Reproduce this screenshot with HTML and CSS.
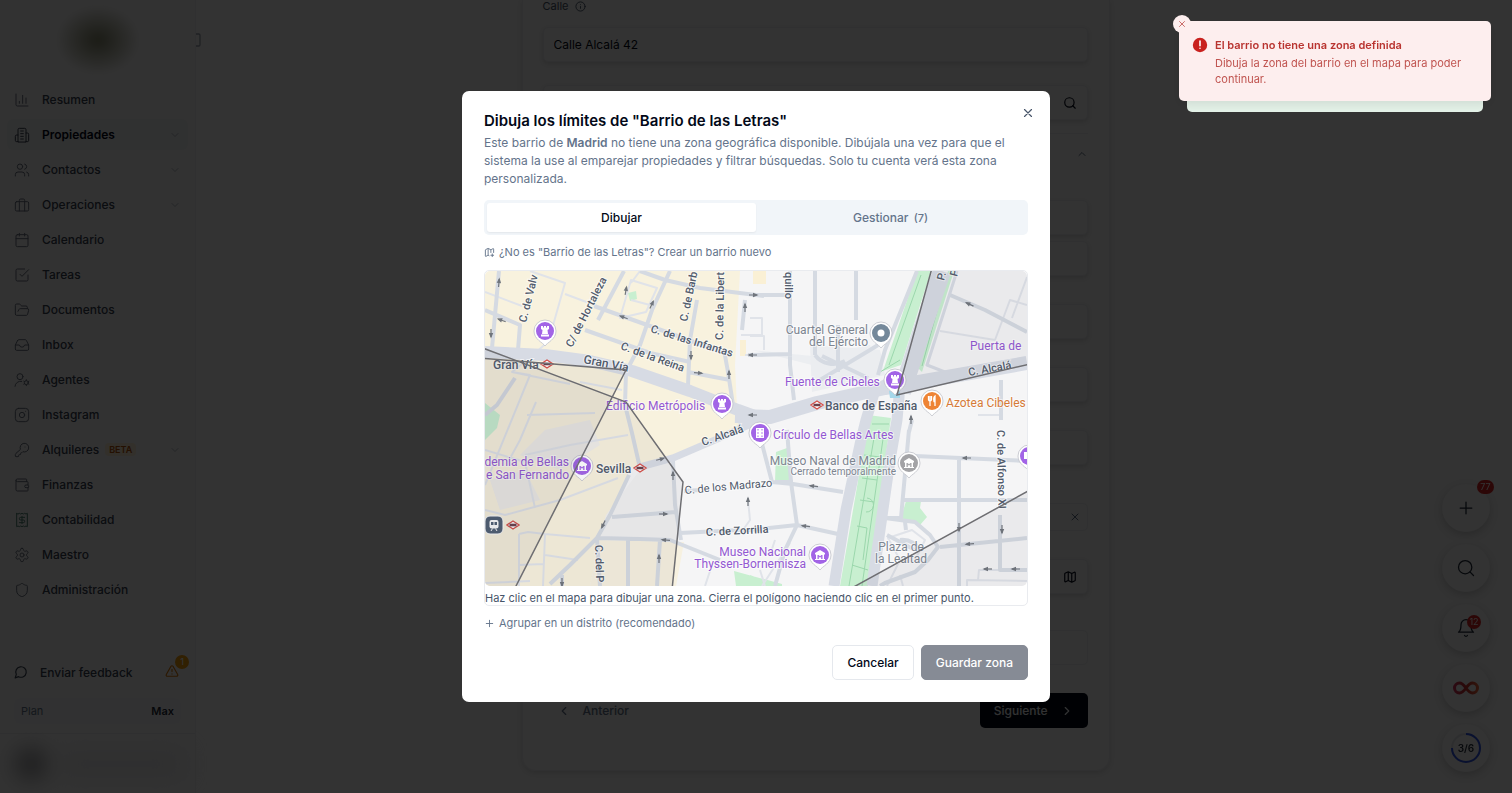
FILE: index.html
```html
<!DOCTYPE html>
<html lang="es">
<head>
  <meta charset="UTF-8" />
  <meta name="viewport" content="width=device-width, initial-scale=1.0"/>
  <title>Propiedades</title>
  <link rel="stylesheet" href="styles.css">
</head>
<body>

  <!-- icon sprite -->
  <svg class="sprite" aria-hidden="true">
    <symbol id="i-chart" viewBox="0 0 24 24"><path d="M3 3v16a2 2 0 0 0 2 2h16M18 17V9M13 17V5M8 17v-3"/></symbol>
    <symbol id="i-building" viewBox="0 0 24 24"><path d="M6 22V4a2 2 0 0 1 2-2h8a2 2 0 0 1 2 2v18ZM6 12H4a2 2 0 0 0-2 2v6a2 2 0 0 0 2 2h2M18 9h2a2 2 0 0 1 2 2v9a2 2 0 0 1-2 2h-2M10 6h4M10 10h4M10 14h4M10 18h4"/></symbol>
    <symbol id="i-users" viewBox="0 0 24 24"><path d="M16 21v-2a4 4 0 0 0-4-4H6a4 4 0 0 0-4 4v2M22 21v-2a4 4 0 0 0-3-3.87M16 3.13a4 4 0 0 1 0 7.75"/><circle cx="9" cy="7" r="4"/></symbol>
    <symbol id="i-briefcase" viewBox="0 0 24 24"><rect x="2" y="7" width="20" height="14" rx="2"/><path d="M16 21V5a2 2 0 0 0-2-2h-4a2 2 0 0 0-2 2v16"/></symbol>
    <symbol id="i-calendar" viewBox="0 0 24 24"><rect x="3" y="4" width="18" height="18" rx="2"/><path d="M16 2v4M8 2v4M3 10h18"/></symbol>
    <symbol id="i-check" viewBox="0 0 24 24"><path d="m9 11 3 3L22 4M21 12v7a2 2 0 0 1-2 2H5a2 2 0 0 1-2-2V5a2 2 0 0 1 2-2h11"/></symbol>
    <symbol id="i-folder" viewBox="0 0 24 24"><path d="m6 14 1.5-2.9A2 2 0 0 1 9.24 10H20a2 2 0 0 1 1.94 2.5l-1.54 6a2 2 0 0 1-1.95 1.5H4a2 2 0 0 1-2-2V5a2 2 0 0 1 2-2h3.9a2 2 0 0 1 1.69.9l.81 1.2a2 2 0 0 0 1.67.9H18a2 2 0 0 1 2 2v2"/></symbol>
    <symbol id="i-inbox" viewBox="0 0 24 24"><path d="M22 12h-6l-2 3h-4l-2-3H2M5.45 5.11 2 12v6a2 2 0 0 0 2 2h16a2 2 0 0 0 2-2v-6l-3.45-6.89A2 2 0 0 0 16.76 4H7.24a2 2 0 0 0-1.79 1.11z"/></symbol>
    <symbol id="i-agent" viewBox="0 0 24 24"><circle cx="9" cy="7" r="4.5"/><circle cx="18.5" cy="16" r="3"/><path d="M1.5 21.5a8 8 0 0 1 10-7.5M18.5 11.5V13M18.5 19v1.5M14.6 13.8l1.3.7M21.1 17.5l1.3.7M14.6 18.2l1.3-.7M21.1 14.5l1.3-.7"/></symbol>
    <symbol id="i-instagram" viewBox="0 0 24 24"><rect x="2" y="2" width="20" height="20" rx="5"/><circle cx="12" cy="12" r="4"/><path d="M17.5 6.5h.01"/></symbol>
    <symbol id="i-key" viewBox="0 0 24 24"><path d="M2.586 17.414A2 2 0 0 0 2 18.828V21a1 1 0 0 0 1 1h3a1 1 0 0 0 1-1v-1a1 1 0 0 1 1-1h1a1 1 0 0 0 1-1v-1a1 1 0 0 1 1-1h.172a2 2 0 0 0 1.414-.586l.814-.814a6.5 6.5 0 1 0-4-4z"/><path d="M16.5 7.5h.01"/></symbol>
    <symbol id="i-wallet" viewBox="0 0 24 24"><path d="M19 7V4a1 1 0 0 0-1-1H5a2 2 0 0 0 0 4h15a1 1 0 0 1 1 1v4h-3a2 2 0 0 0 0 4h3a1 1 0 0 0 1-1v-2a1 1 0 0 0-1-1M3 5v14a2 2 0 0 0 2 2h15a1 1 0 0 0 1-1v-4"/></symbol>
    <symbol id="i-receipt" viewBox="0 0 24 24"><path d="M4 2v20l2-1 2 1 2-1 2 1 2-1 2 1 2-1 2 1V2l-2 1-2-1-2 1-2-1-2 1-2-1-2 1ZM16 8h-6a2 2 0 1 0 0 4h4a2 2 0 1 1 0 4H8M12 17.5v-11"/></symbol>
    <symbol id="i-gear" viewBox="0 0 24 24"><path d="M12.22 2h-.44a2 2 0 0 0-2 2v.18a2 2 0 0 1-1 1.73l-.43.25a2 2 0 0 1-2 0l-.15-.08a2 2 0 0 0-2.73.73l-.22.38a2 2 0 0 0 .73 2.73l.15.1a2 2 0 0 1 1 1.72v.51a2 2 0 0 1-1 1.74l-.15.09a2 2 0 0 0-.73 2.73l.22.38a2 2 0 0 0 2.73.73l.15-.08a2 2 0 0 1 2 0l.43.25a2 2 0 0 1 1 1.73V20a2 2 0 0 0 2 2h.44a2 2 0 0 0 2-2v-.18a2 2 0 0 1 1-1.73l.43-.25a2 2 0 0 1 2 0l.15.08a2 2 0 0 0 2.73-.73l.22-.39a2 2 0 0 0-.73-2.73l-.15-.08a2 2 0 0 1-1-1.74v-.5a2 2 0 0 1 1-1.74l.15-.09a2 2 0 0 0 .73-2.73l-.22-.38a2 2 0 0 0-2.73-.73l-.15.08a2 2 0 0 1-2 0l-.43-.25a2 2 0 0 1-1-1.73V4a2 2 0 0 0-2-2z"/><circle cx="12" cy="12" r="3"/></symbol>
    <symbol id="i-shield" viewBox="0 0 24 24"><path d="M20 13c0 5-3.5 7.5-7.66 8.95a1 1 0 0 1-.67-.01C7.5 20.5 4 18 4 13V6a1 1 0 0 1 1-1c2 0 4.5-1.2 6.24-2.72a1.17 1.17 0 0 1 1.52 0C14.51 3.81 17 5 19 5a1 1 0 0 1 1 1z"/></symbol>
    <symbol id="i-message" viewBox="0 0 24 24"><path d="M7.9 20A9 9 0 1 0 4 16.1L2 22Z"/></symbol>
    <symbol id="i-alert" viewBox="0 0 24 24"><path d="m21.73 18-8-14a2 2 0 0 0-3.48 0l-8 14A2 2 0 0 0 4 21h16a2 2 0 0 0 1.73-3M12 9v4M12 17h.01"/></symbol>
    <symbol id="i-down" viewBox="0 0 24 24"><path d="m6 9 6 6 6-6"/></symbol>
    <symbol id="i-up" viewBox="0 0 24 24"><path d="m18 15-6-6-6 6"/></symbol>
    <symbol id="i-left" viewBox="0 0 24 24"><path d="m15 18-6-6 6-6"/></symbol>
    <symbol id="i-right" viewBox="0 0 24 24"><path d="m9 18 6-6-6-6"/></symbol>
    <symbol id="i-x" viewBox="0 0 24 24"><path d="M18 6 6 18M6 6l12 12"/></symbol>
    <symbol id="i-plus" viewBox="0 0 24 24"><path d="M5 12h14M12 5v14"/></symbol>
    <symbol id="i-search" viewBox="0 0 24 24"><circle cx="11" cy="11" r="8"/><path d="m21 21-4.3-4.3"/></symbol>
    <symbol id="i-info" viewBox="0 0 24 24"><circle cx="12" cy="12" r="10"/><path d="M12 16v-4M12 8h.01"/></symbol>
    <symbol id="i-panel" viewBox="0 0 24 24"><rect x="3" y="3" width="18" height="18" rx="2"/></symbol>
    <symbol id="i-map" viewBox="0 0 24 24"><path d="M14.106 5.553a2 2 0 0 0 1.788 0l3.659-1.83A1 1 0 0 1 21 4.619v12.764a1 1 0 0 1-.553.894l-4.553 2.277a2 2 0 0 1-1.788 0l-4.212-2.106a2 2 0 0 0-1.788 0l-3.659 1.83A1 1 0 0 1 3 19.381V6.618a1 1 0 0 1 .553-.894l4.553-2.277a2 2 0 0 1 1.788 0zM15 5.764v15M9 3.236v15"/></symbol>
    <symbol id="i-mapadd" viewBox="0 0 24 24"><path d="m11 19-1.106-.552a2 2 0 0 0-1.788 0l-3.659 1.83A1 1 0 0 1 3 19.381V6.618a1 1 0 0 1 .553-.894l4.553-2.277a2 2 0 0 1 1.788 0l4.212 2.106a2 2 0 0 0 1.788 0l3.659-1.83A1 1 0 0 1 21 4.619V12M15 5.764V12M18 15v6M21 18h-6M9 3.236v15"/></symbol>
    <symbol id="i-bell" viewBox="0 0 24 24"><path d="M6 8a6 6 0 0 1 12 0c0 7 3 9 3 9H3s3-2 3-9M10.3 21a1.94 1.94 0 0 0 3.4 0"/></symbol>

    <!-- map markers, origin at the centre of the disc -->
    <symbol id="pin" viewBox="-14 -14 28 32" overflow="visible"><path d="M0 15C-2 11.5-11 8.5-11 0a11 11 0 0 1 22 0C11 8.500 2 11.500 0 15z" fill="#fff" stroke="#bfc0c8" stroke-width=".8"/><circle r="9" fill="currentColor"/></symbol>
    <symbol id="g-tower" overflow="visible" viewBox="-8 -8 16 16"><path d="M-4-5h2v1.500h1V-5h2v1.500h1V-5h2v3l-1.500 1L3 3H-3l.5-4L-4-2zM-4 3.500h8V5.500h-8z" fill="#fff"/></symbol>
    <symbol id="g-museum" overflow="visible" viewBox="-8 -8 16 16"><path d="M-5-2 0-5l5 3v1.500H4V4h1v1h-10V4h1V-.5h-1zM-2.500 0v4h1.300V1.500L0 2.700l1.200-1.200V4h1.300V0H1.500L0 1.300-1.500 0z" fill="#fff" fill-rule="evenodd"/></symbol>
    <symbol id="g-metro" overflow="visible" viewBox="-8 -8 16 16"><path d="M-6.200 0 0-4 6.200 0 0 4z" fill="#fff" stroke="#d6504a" stroke-width="1.400" stroke-linejoin="round"/><path d="M-3.500-1.300h7v2.600h-7z" fill="#6b3f4a"/></symbol>
    <symbol id="arrow" overflow="visible" viewBox="-6 -6 12 12"><path d="M-5 0H3" stroke="#70757c" stroke-width="1.200"/><path d="M-1-2.200 4.500 0-1 2.200z" fill="#70757c"/></symbol>
  </svg>

  <div class="app">
    <aside class="sidebar">
      <div class="brand"><div class="brand-logo"></div></div>
      <nav class="menu">
        <a href="#"><svg class="icon"><use href="#i-chart"/></svg>Resumen</a>
        <a href="#" class="active"><svg class="icon"><use href="#i-building"/></svg>Propiedades<svg class="icon chevron"><use href="#i-down"/></svg></a>
        <a href="#"><svg class="icon"><use href="#i-users"/></svg>Contactos<svg class="icon chevron"><use href="#i-down"/></svg></a>
        <a href="#"><svg class="icon"><use href="#i-briefcase"/></svg>Operaciones<svg class="icon chevron"><use href="#i-down"/></svg></a>
        <a href="#"><svg class="icon"><use href="#i-calendar"/></svg>Calendario</a>
        <a href="#"><svg class="icon"><use href="#i-check"/></svg>Tareas</a>
        <a href="#"><svg class="icon"><use href="#i-folder"/></svg>Documentos</a>
        <a href="#"><svg class="icon"><use href="#i-inbox"/></svg>Inbox</a>
        <a href="#"><svg class="icon"><use href="#i-agent"/></svg>Agentes</a>
        <a href="#"><svg class="icon"><use href="#i-instagram"/></svg>Instagram</a>
        <a href="#"><svg class="icon"><use href="#i-key"/></svg>Alquileres<span class="beta">BETA</span><svg class="icon chevron"><use href="#i-down"/></svg></a>
        <a href="#"><svg class="icon"><use href="#i-wallet"/></svg>Finanzas</a>
        <a href="#"><svg class="icon green"><use href="#i-receipt"/></svg>Contabilidad</a>
        <a href="#"><svg class="icon"><use href="#i-gear"/></svg>Maestro</a>
        <a href="#"><svg class="icon"><use href="#i-shield"/></svg>Administración</a>
      </nav>
      <div class="sidebar-bottom">
        <div class="feedback">
          <a href="#"><svg class="icon"><use href="#i-message"/></svg>Enviar feedback</a>
          <button class="warn" aria-label="Avisos"><svg class="icon"><use href="#i-alert"/></svg><span class="warn-count">1</span></button>
        </div>
        <div class="plan"><span>Plan</span><strong>Max</strong></div>
      </div>
      <div class="user"><div class="user-avatar"></div><div class="user-name"></div></div>
    </aside>

    <button class="panel-toggle" aria-label="Contraer menú"><svg class="icon"><use href="#i-panel"/></svg></button>

    <main class="main">
      <form class="card">
        <label class="label" for="calle">Calle <svg class="icon"><use href="#i-info"/></svg></label>
        <input class="field" id="calle" type="text" value="Calle Alcalá 42">
        <div class="field with-icon search-row"><svg class="icon"><use href="#i-search"/></svg></div>
        <div class="section-head"><svg class="icon"><use href="#i-up"/></svg></div>
        <div class="stack">
          <div class="field"></div>
          <div class="field"></div>
        </div>
        <div class="field"></div>
        <div class="field"></div>
        <div class="field"></div>
        <div class="field with-icon tag-row"><svg class="icon"><use href="#i-x"/></svg></div>
        <div class="field with-icon"><svg class="icon"><use href="#i-map"/></svg></div>
        <div class="field summary"></div>
        <div class="steps">
          <button type="button" class="prev"><svg class="icon"><use href="#i-left"/></svg>Anterior</button>
          <button type="button" class="next">Siguiente<svg class="icon"><use href="#i-right"/></svg></button>
        </div>
      </form>
    </main>

    <div class="fabs">
      <button class="fab" aria-label="Añadir"><svg class="icon"><use href="#i-plus"/></svg><span class="count outer">77</span></button>
      <button class="fab" aria-label="Buscar"><svg class="icon"><use href="#i-search"/></svg></button>
      <button class="fab" aria-label="Notificaciones"><svg class="icon"><use href="#i-bell"/></svg><span class="count">12</span></button>
      <button class="fab" aria-label="Asistente">
        <svg class="infinity" viewBox="0 0 26 14">
          <defs><linearGradient id="inf"><stop offset="0" stop-color="#d6345c"/><stop offset=".5" stop-color="#c9302c"/><stop offset="1" stop-color="#f0643c"/></linearGradient></defs>
          <path d="M13 7C10.500 3.500 9 2 6.500 2a5 5 0 0 0 0 10C9 12 10.500 10.500 13 7s4-5 6.500-5a5 5 0 0 1 0 10C17 12 15.500 10.500 13 7z" fill="none" stroke="url(#inf)" stroke-width="3"/>
        </svg>
      </button>
      <button class="fab progress" aria-label="Progreso">
        <svg viewBox="0 0 32 32"><circle cx="16" cy="16" r="14"/><path d="M16 2A14 14 0 1 1 2 16"/></svg>
        <span>3/6</span>
      </button>
    </div>
  </div>

  <div class="overlay">
    <section class="dialog" role="dialog" aria-labelledby="dialog-title">
      <button class="close" aria-label="Cerrar"><svg class="icon"><use href="#i-x"/></svg></button>
      <h2 id="dialog-title">Dibuja los límites de "Barrio de las Letras"</h2>
      <p class="intro">Este barrio de <b>Madrid</b> no tiene una zona geográfica disponible. Dibújala una vez para que el sistema la use al emparejar propiedades y filtrar búsquedas. Solo tu cuenta verá esta zona personalizada.</p>

      <div class="tabs" role="tablist">
        <button role="tab" aria-selected="true" class="tab selected">Dibujar</button>
        <button role="tab" aria-selected="false" class="tab">Gestionar <small>(7)</small></button>
      </div>

      <button class="text-link"><svg class="icon"><use href="#i-mapadd"/></svg>¿No es "Barrio de las Letras"? Crear un barrio nuevo</button>

      <div class="map-box">
        <svg class="map" viewBox="485 271 542 315" preserveAspectRatio="xMidYMid slice">
          <rect x="485" y="271" width="542" height="315" fill="#f5f5f6"/>
          <!-- commercial areas -->
          <path d="M485 271H740L735 365 737 408 755 425 700 447 660 463 630 468 618 500 600 540 590 586H485z" fill="#f8f2de"/>
          <path d="M600 540 684 542 676 586H590z" fill="#f7f1e0"/>
          <path d="M606 515 640 470 674 462 681 540 600 538z" fill="#f1f1f1"/>
          <path d="M545 430 590 420 600 445 560 470 520 455zM490 480 525 470 540 500 500 510z" fill="#eeece8"/>
          <path d="M753 271H766V284H753zM740 340h6v16h-6z" fill="#faf0d5"/>
          <path d="M752 350 812 356 870 345 880 372 812 388 812 365z" fill="#eceef1"/>
          <path d="M810 345 880 350 885 375 812 392z" fill="#ebedf0"/>
          <!-- parks -->
          <g fill="#c8efd0">
            <path d="M485 403 500 415 497 428 485 440z"/>
            <path d="M628 293 636 291 637 299 630 301z"/>
            <path d="M917 271H931L901 365 883 371z"/>
            <path d="M948 271H954L922 372 918 368z"/>
            <path d="M868 415 891 418 868 586H840L865 440z"/>
            <path d="M776 452 787 448 791 482 775 482z"/>
            <path d="M906 501H921L920 508 927 517 920 525 901 518z"/>
            <path d="M734 571 782 584V586H736zM750 575l30 11h-30z"/>
          </g>
          <g fill="none" stroke="#9bd7ac" stroke-width="1">
            <path d="M921 275 889 365M880 372 900 360M940 300 922 366M872 424H889M875 432 849 586M884 432 862 586M864 455 880 457M862 478 877 480M860 500 874 502M857 526 867 528 863 560M852 565 868 570M867 498a7 7 0 1 1-1 14"/>
          </g>

          <!-- thin lanes -->
          <g class="lane">
            <path d="M485 292 522 306M530 271 565 283 550 336M565 294 597 306M550 340 527 360 512 372 530 375 485 485M536 402 520 440 508 462M512 372 570 384M527 415 595 413M580 382 622 390"/>
            <path d="M620 318 631 280 657 288 646 312zM631 300 650 305M640 271 631 283"/>
            <path d="M485 450 525 462 535 508M525 455 570 445 628 435M485 510 505 515 560 500 618 478M519 534 528 532 545 534 590 538M545 534 543 586M519 534V586M545 555 578 560M519 565 543 564M485 583 530 581"/>
            <path d="M750 336H764V350M741 335H762V318H750M745 355H760M940 331 995 340 1010 300 1027 305M978 415H1001M1027 277 1012 318M790 543 762 586M760 570 765 586M887 586 900 560 888 538 912 530 925 540 915 560M900 575 903 586M967 586V580L1027 581M978 580 979 570H1027"/>
            <path d="M748 500 750 520 743 530M705 586 712 565M775 540 770 555"/>
          </g>

          <!-- minor streets -->
          <g class="street">
            <path d="M499 271 492 348M485 310 520 325 518 350" />
            <path d="M585 330 650 353 690 362M594 306 650 326 730 355M624 271 598 320M670 271 652 310 640 345 627 370M640 271 665 280 700 288 764 296M697 300 690 340 688 385M724 350 728 372 733 405M688 372 730 380"/>
            <path d="M626 372 625 405 632 433 640 468M515 378 497 405 485 415"/>
            <path d="M629 475 610 515 597 538 570 565 550 584M597 538 640 539 670 540 720 560M628 540V586M660 540 657 586M612 517 676 512M673 461 675 505 681 540M562 575V586M680 533 740 530M684 491 700 490M597 538 600 586"/>
            <path d="M752 295 792 295M790 271V365L794 400M815 271V355M856 271V320M748 355 792 354M815 355a22 20 0 0 0 30 6M838 325V372M820 380 870 350 878 345M822 356 868 378M745 300 742 330"/>
            <path d="M950 295 985 310 1027 332M1001 380V420M1000 515V570H1027M959 458 959 586M915 456 1027 461M904 500 1027 500M940 547 1027 538M909 430 901 518 885 518"/>
            <path d="M885 518 915 522 930 535 938 547 928 560 915 572 885 583 880 586M905 522 906 530M900 540a18 15 0 0 1 20 12M887 535 915 550"/>
            <path d="M787 430 791 482 797 525 785 550 775 586M761 440 772 482 793 484 843 492M740 531 797 525 838 534M912 420 909 432M775 482 793 482"/>
            <path d="M917 271 885 350 878 375"/>
          </g>

          <!-- main roads -->
          <g fill="none" stroke="#d7dbe4" stroke-linejoin="round">
            <path d="M485 352 545 355 590 361 632 371 690 391 738 410 760 418" stroke-width="12"/>
            <path d="M640 467 673 458 715 440 760 420" stroke-width="7"/>
            <path d="M735 416 770 417 817 403 885 388 930 380 1027 363" stroke-width="14"/>
            <path d="M942 271 922 330 902 392" stroke-width="18"/>
            <path d="M957 271 927 365 950 374" stroke-width="3"/>
            <path d="M905 375 875 390 866 420 861 440 846 510 834 586" stroke-width="11"/>
            <path d="M900 385 897 420 890 460 872 586" stroke-width="11"/>
          </g>
          <path d="M735 430 765 426 745 412z" fill="#d7dbe4"/>
          <path d="M889 391 900 388 900 398 890 398z" fill="#a5d8ea"/>

          <!-- one way arrows -->
          <g>
            <use href="#arrow" width="12" height="12" x="-6" y="-6" transform="translate(499 282) rotate(-85)"/>
            <use href="#arrow" width="12" height="12" x="-6" y="-6" transform="translate(501 320) rotate(200)"/>
            <use href="#arrow" width="12" height="12" x="-6" y="-6" transform="translate(491 334) rotate(90)"/>
            <use href="#arrow" width="12" height="12" x="-6" y="-6" transform="translate(626 290) rotate(-80)"/>
            <use href="#arrow" width="12" height="12" x="-6" y="-6" transform="translate(652 304) rotate(-65)"/>
            <use href="#arrow" width="12" height="12" x="-6" y="-6" transform="translate(623 317) rotate(200)"/>
            <use href="#arrow" width="12" height="12" x="-6" y="-6" transform="translate(754 295)"/>
            <use href="#arrow" width="12" height="12" x="-6" y="-6" transform="translate(745 307) rotate(-90)"/>
            <use href="#arrow" width="12" height="12" x="-6" y="-6" transform="translate(691 356) rotate(90)"/>
            <use href="#arrow" width="12" height="12" x="-6" y="-6" transform="translate(699 373) rotate(5)"/>
            <use href="#arrow" width="12" height="12" x="-6" y="-6" transform="translate(729 374) rotate(-90)"/>
            <use href="#arrow" width="12" height="12" x="-6" y="-6" transform="translate(752 355) rotate(180)"/>
            <use href="#arrow" width="12" height="12" x="-6" y="-6" transform="translate(752 415) rotate(180)"/>
            <use href="#arrow" width="12" height="12" x="-6" y="-6" transform="translate(969 304) rotate(205)"/>
            <use href="#arrow" width="12" height="12" x="-6" y="-6" transform="translate(911 419) rotate(-90)"/>
            <use href="#arrow" width="12" height="12" x="-6" y="-6" transform="translate(661 459) rotate(-15)"/>
            <use href="#arrow" width="12" height="12" x="-6" y="-6" transform="translate(673 475) rotate(-90)"/>
            <use href="#arrow" width="12" height="12" x="-6" y="-6" transform="translate(664 514)"/>
            <use href="#arrow" width="12" height="12" x="-6" y="-6" transform="translate(603 525) rotate(115)"/>
            <use href="#arrow" width="12" height="12" x="-6" y="-6" transform="translate(665 540) rotate(185)"/>
            <use href="#arrow" width="12" height="12" x="-6" y="-6" transform="translate(659 558) rotate(-90)"/>
            <use href="#arrow" width="12" height="12" x="-6" y="-6" transform="translate(562 583) rotate(90)"/>
            <use href="#arrow" width="12" height="12" x="-6" y="-6" transform="translate(748 501) rotate(-90)"/>
            <use href="#arrow" width="12" height="12" x="-6" y="-6" transform="translate(813 486) rotate(187)"/>
            <use href="#arrow" width="12" height="12" x="-6" y="-6" transform="translate(805 526) rotate(187)"/>
            <use href="#arrow" width="12" height="12" x="-6" y="-6" transform="translate(966 458) rotate(180)"/>
            <use href="#arrow" width="12" height="12" x="-6" y="-6" transform="translate(959 528) rotate(90)"/>
            <use href="#arrow" width="12" height="12" x="-6" y="-6" transform="translate(969 544) rotate(175)"/>
            <use href="#arrow" width="12" height="12" x="-6" y="-6" transform="translate(1002 530) rotate(90)"/>
            <use href="#arrow" width="12" height="12" x="-6" y="-6" transform="translate(987 569) rotate(180)"/>
            <use href="#arrow" width="12" height="12" x="-6" y="-6" transform="translate(1015 569) rotate(180)"/>
          </g>

          <!-- street names -->
          <g class="name">
            <text transform="translate(526 323) rotate(-76)">C. de Valv</text>
            <text transform="translate(572 348) rotate(-63)">C/ de Hortaleza</text>
            <text transform="translate(687 322) rotate(-78)">C. de Barb</text>
            <text transform="translate(723 340) rotate(-89)">C. de la Libert</text>
            <text transform="translate(650 332) rotate(17)">C. de las Infantas</text>
            <text transform="translate(620 349) rotate(20)">C. de la Reina</text>
            <text class="strong" transform="translate(583 363) rotate(11)">Gran Vía</text>
            <text class="strong" x="493" y="369">Gran Vía</text>
            <text transform="translate(785 272) rotate(90)">quillo</text>
            <text transform="translate(944 281) rotate(-75)">P.</text>
            <text transform="translate(957 277) rotate(-75)">P</text>
            <text transform="translate(969 376) rotate(-10)">C. Alcalá</text>
            <text transform="translate(703 446) rotate(-19)">C. Alcalá</text>
            <text class="strong" x="596" y="473">Sevilla</text>
            <text class="thin" transform="translate(685 494) rotate(-5)">C. de los Madrazo</text>
            <text transform="translate(706 536) rotate(-3)">C. de Zorrilla</text>
            <text transform="translate(595 545) rotate(88)">C. del P</text>
            <text transform="translate(997 430) rotate(89)">C. de Alfonso XI</text>
            <text class="strong" x="825" y="410">Banco de España</text>
          </g>
          <!-- places -->
          <g class="place">
            <text x="606" y="410">Edificio Metrópolis</text>
            <text x="785" y="386">Fuente de Cibeles</text>
            <text x="773" y="439">Círculo de Bellas Artes</text>
            <text x="970" y="350">Puerta de</text>
            <text class="end" x="569" y="466">demia de Bellas</text>
            <text class="end" x="569" y="479">e San Fernando</text>
            <text class="end" x="806" y="556">Museo Nacional</text>
            <text class="end" x="806" y="568">Thyssen-Bornemisza</text>
          </g>
          <g class="place grey">
            <text class="end" x="868" y="334">Cuartel General</text>
            <text class="end" x="868" y="346">del Ejército</text>
            <text class="end" x="896" y="465">Museo Naval de Madrid</text>
            <text class="end small" x="896" y="475">Cerrado temporalmente</text>
            <text class="mid" x="901" y="551">Plaza de</text>
            <text class="mid" x="901" y="563">la Lealtad</text>
          </g>
          <g class="place orange"><text x="946" y="407">Azotea Cibeles</text></g>

          <!-- markers -->
          <g color="#a264e6">
            <g transform="translate(545 331)"><use href="#pin" x="-14" y="-14" width="28" height="32"/><use href="#g-tower" x="-8" y="-8" width="16" height="16"/></g>
            <g transform="translate(722 404)"><use href="#pin" x="-14" y="-14" width="28" height="32"/><use href="#g-tower" x="-8" y="-8" width="16" height="16"/></g>
            <g transform="translate(895 380)"><use href="#pin" x="-14" y="-14" width="28" height="32"/><use href="#g-tower" x="-8" y="-8" width="16" height="16"/></g>
            <g transform="translate(760 433)"><use href="#pin" x="-14" y="-14" width="28" height="32"/><path d="M-4-5h8V5h-8z" fill="#fff"/><path d="M-2-4v1.500M-2-.8v1.600M-2 2.500V4M2-4v1.500M2-.8v1.600M2 2.500V4" stroke="#a264e6"/></g>
            <g transform="translate(582 466)"><use href="#pin" x="-14" y="-14" width="28" height="32"/><use href="#g-museum" x="-8" y="-8" width="16" height="16"/></g>
            <g transform="translate(820 555)"><use href="#pin" x="-14" y="-14" width="28" height="32"/><use href="#g-museum" x="-8" y="-8" width="16" height="16"/></g>
            <g transform="translate(1029 456)"><use href="#pin" x="-14" y="-14" width="28" height="32"/><path d="M-5-4h4v7h-4z" fill="#fff"/></g>
          </g>
          <g transform="translate(909 463)" color="#a3a3a6"><use href="#pin" x="-14" y="-14" width="28" height="32"/><use href="#g-museum" x="-8" y="-8" width="16" height="16"/></g>
          <g transform="translate(881 333)" color="#74889a"><use href="#pin" x="-14" y="-14" width="28" height="32"/><circle r="3.500" fill="#fff"/></g>
          <g transform="translate(932 401)" color="#ee8435"><use href="#pin" x="-14" y="-14" width="28" height="32"/><path d="M-3.500-5v3.500a1.500 1.500 0 0 0 3 0V-5M-2-5V5M3 5V-5C1.500-4 1.500-2 2 .5h1" fill="none" stroke="#fff" stroke-width="1.300"/></g>
          <g transform="translate(494 525)"><rect x="-9" y="-9" width="18" height="18" rx="5" fill="#4f5f73" stroke="#fff"/><rect x="-4.500" y="-5" width="9" height="8.500" rx="2" fill="#fff"/><path d="M-3-3h2.500v3H-3zM.5-3H3v3H.5z" fill="#4f5f73"/><path d="M-3 6-1.500 3.500M3 6 1.500 3.500" stroke="#fff"/></g>
          <use href="#g-metro" x="539" y="356" width="16" height="16"/>
          <use href="#g-metro" x="632" y="460" width="16" height="16"/>
          <use href="#g-metro" x="505" y="517" width="16" height="16"/>
          <use href="#g-metro" x="809" y="397" width="16" height="16"/>

          <!-- existing zones -->
          <g class="zone">
            <path d="M480 347 626 402 683 482 672 590H480z"/>
            <path d="M480 358 626 370 514 590H480z"/>
            <path d="M932 268 897 395 1030 364V268z"/>
            <path d="M850 589 1030 490V590z"/>
          </g>
        </svg>
        <p class="hint">Haz clic en el mapa para dibujar una zona. Cierra el polígono haciendo clic en el primer punto.</p>
      </div>

      <button class="text-link"><svg class="icon"><use href="#i-plus"/></svg>Agrupar en un distrito (recomendado)</button>

      <div class="actions">
        <button class="btn">Cancelar</button>
        <button class="btn primary" disabled>Guardar zona</button>
      </div>
    </section>
  </div>

  <div class="toasts">
    <div class="toast-behind"></div>
    <div class="toast" role="alert">
      <button class="toast-close" aria-label="Cerrar aviso"><svg class="icon"><use href="#i-x"/></svg></button>
      <svg class="toast-icon" viewBox="0 0 20 20"><circle cx="10" cy="10" r="9" fill="#c9211e"/><path d="M10 5v6M10 14h.01" stroke="#fff" stroke-width="2" stroke-linecap="round"/></svg>
      <div>
        <strong>El barrio no tiene una zona definida</strong>
        <p>Dibuja la zona del barrio en el mapa para poder continuar.</p>
      </div>
    </div>
  </div>

</body>
</html>
```
FILE: styles.css
```css
* {
  box-sizing: border-box;
}

body {
  margin: 0;
  height: 100vh;
  overflow: hidden;
  background: #fcfcfc;
  color: #020817;
  font-family: Inter, "Liberation Sans", sans-serif;
  font-size: 12px;
}

a {
  color: inherit;
  text-decoration: none;
}

button {
  font: inherit;
  color: inherit;
  background: none;
  border: 0;
  padding: 0;
  cursor: pointer;
}

p,
h2 {
  margin: 0;
}

.sprite {
  position: absolute;
  width: 0;
  height: 0;
}

.icon {
  width: 14px;
  height: 14px;
  flex: none;
  fill: none;
  stroke: currentColor;
  stroke-width: 2;
  stroke-linecap: round;
  stroke-linejoin: round;
}

/* page behind the dialog */
.app {
  display: flex;
  height: 100vh;
}

.sidebar {
  width: 196px;
  flex: none;
  display: flex;
  flex-direction: column;
  background: #fafafa;
  border-right: 1px solid #f0f0f2;
}

.brand {
  height: 80px;
  display: flex;
  align-items: center;
  justify-content: center;
}

.brand-logo {
  width: 90px;
  height: 74px;
  background: radial-gradient(#85876a, transparent 65%);
  filter: blur(3px);
}

.menu {
  display: flex;
  flex-direction: column;
  gap: 4px;
  padding: 4px 7px;
}

.menu a {
  display: flex;
  align-items: center;
  gap: 12px;
  height: 31px;
  padding: 0 7px;
  border-radius: 6px;
  font-weight: 500;
  font-size: 12px;
  color: #374151;
}

.menu .icon {
  width: 16px;
  height: 16px;
  stroke-width: 1.5;
  color: #6b7280;
}

.menu .active {
  background: #f1f2f4;
  color: #020817;
  font-weight: 600;
}

.menu .active .icon {
  color: #374151;
}

.menu .icon.green {
  color: #4f8072;
}

.menu .icon.chevron,
.menu .active .icon.chevron {
  width: 12px;
  height: 12px;
  margin-left: auto;
  color: #9ca3af;
}

.beta {
  margin-left: -6px;
  padding: 1px 4px;
  border-radius: 4px;
  background: #fdf0d5;
  color: #b45309;
  font-size: 9px;
  font-weight: 600;
}

.sidebar-bottom {
  margin-top: auto;
  padding: 0 14px 9px;
}

.feedback {
  display: flex;
  justify-content: space-between;
  align-items: center;
  height: 36px;
  font-weight: 500;
  font-size: 12px;
  color: #374151;
}

.feedback a {
  display: flex;
  align-items: center;
  gap: 12px;
}

.warn {
  position: relative;
  color: #d97706;
  margin-right: 2px;
}

.warn-count {
  position: absolute;
  left: 10px;
  top: -9px;
  width: 14px;
  height: 14px;
  border-radius: 50%;
  background: #f59e0b;
  color: #fff;
  font-size: 9px;
  line-height: 14px;
}

.plan {
  display: flex;
  justify-content: space-between;
  align-items: center;
  height: 26px;
  margin-top: 8px;
  padding: 0 7px;
  border-radius: 6px;
  background: #f5f6f7;
  font-size: 11px;
  color: #64748b;
}

.plan strong {
  font-weight: 600;
  color: #1f2937;
}

.user {
  display: flex;
  align-items: center;
  gap: 12px;
  height: 60px;
  padding: 0 14px;
  border-top: 1px solid #ebebee;
}

.user-avatar {
  width: 34px;
  height: 34px;
  border-radius: 50%;
  background: #a5a5a8;
  filter: blur(10px);
}

.user-name {
  flex: 1;
  height: 20px;
  background: #e2e2e5;
  filter: blur(12px);
}

.panel-toggle {
  align-self: flex-start;
  width: 0;
  margin-top: 32px;
}

.panel-toggle .icon {
  width: 16px;
  height: 16px;
  margin-left: -10px;
  color: #9ca3af;
  clip-path: inset(0 0 0 10px);
}

.main {
  flex: 1;
  padding: 0 77px 0 0;
}

.card {
  max-width: 588px;
  height: calc(100vh - 22px);
  min-height: 771px;
  margin: 0 auto;
  padding: 0 21px 42px 20px;
  display: flex;
  flex-direction: column;
  gap: 28px;
  border: 1px solid #f0f0f3;
  border-top: 0;
  border-radius: 0 0 14px 14px;
  box-shadow: 0 2px 5px rgba(0, 0, 0, 0.12);
}

.label {
  display: flex;
  align-items: center;
  gap: 7px;
  height: 12px;
  margin-bottom: -13px;
  font-size: 11px;
  color: #475569;
}

.label .icon {
  width: 11px;
  height: 11px;
}

.field {
  width: 100%;
  height: 35px;
  flex: none;
  padding: 0 10px;
  border: 1px solid #f0f1f4;
  border-radius: 5px;
  background: #fdfdfd;
  box-shadow: 0 2px 4px rgba(0, 0, 0, 0.12);
  color: #020817;
  font-family: inherit;
  font-size: 12px;
}

.search-row {
  margin-top: -5px;
}

.with-icon {
  display: flex;
  align-items: center;
  justify-content: flex-end;
}

.section-head {
  display: flex;
  justify-content: flex-end;
  align-items: center;
  height: 41px;
  margin: -15px 0 -1px;
  color: #64748b;
  border-top: 1px solid #f0f0f3;
}

.section-head .icon {
  width: 12px;
  height: 12px;
}

.stack {
  display: flex;
  flex-direction: column;
  gap: 6px;
}

.tag-row {
  height: 28px;
  margin-top: 10px;
  padding: 0 6px;
  color: #64748b;
  box-shadow: none;
}

.tag-row .icon {
  width: 12px;
  height: 12px;
}

.summary {
  margin-top: 8px;
  box-shadow: none;
}

.steps {
  display: flex;
  justify-content: space-between;
}

.steps button {
  display: flex;
  align-items: center;
  gap: 12px;
  height: 35px;
  padding: 0 14px;
  border-radius: 5px;
  font-size: 12px;
  font-weight: 500;
}

.prev {
  color: #64748b;
}

.steps .next {
  background: #020817;
  color: #f8fafc;
}

.fabs {
  position: fixed;
  right: 22px;
  bottom: 21px;
  display: flex;
  flex-direction: column;
  gap: 12px;
}

.fab {
  position: relative;
  display: flex;
  align-items: center;
  justify-content: center;
  width: 48px;
  height: 48px;
  border-radius: 50%;
  background: #fcfcfc;
  box-shadow: 0 3px 8px rgba(0, 0, 0, 0.18);
  color: #1f2937;
}

.fab .icon {
  width: 20px;
  height: 20px;
  stroke-width: 1.5;
}

.fab .count {
  position: absolute;
  right: 9px;
  top: 11px;
  min-width: 14px;
  height: 14px;
  border-radius: 7px;
  background: #dc2626;
  color: #fff;
  font-size: 9px;
  line-height: 14px;
}

.fab .outer {
  right: -4px;
  top: -4px;
  min-width: 17px;
}

.infinity {
  width: 26px;
  height: 14px;
}

.progress svg {
  position: absolute;
  width: 32px;
  height: 32px;
  fill: none;
  stroke-width: 2;
}

.progress circle {
  stroke: #e5e7eb;
}

.progress path {
  stroke: #2f55e8;
}

.progress span {
  font-size: 10px;
  font-weight: 600;
}

/* dialog */
.overlay {
  position: fixed;
  inset: 0;
  display: grid;
  place-items: center;
  background: rgba(0, 0, 0, 0.8);
}

.dialog {
  position: relative;
  width: 588px;
  max-width: 100%;
  padding: 21px 22px 22px;
  border-radius: 7px;
  background: #fff;
  display: flex;
  flex-direction: column;
}

.close {
  position: absolute;
  top: 15px;
  right: 15px;
  height: 14px;
  color: #475569;
}

.dialog h2 {
  font-size: 15px;
  line-height: 17px;
  font-weight: 600;
}

.intro {
  margin-top: 5px;
  line-height: 18px;
  color: #64748b;
}

.intro b {
  font-weight: 600;
}

.tabs {
  display: grid;
  grid-template-columns: 1fr 1fr;
  height: 35px;
  margin-top: 12px;
  padding: 3px;
  border-radius: 5px;
  background: #f1f5f9;
}

.tab {
  border-radius: 3px;
  font-weight: 500;
  color: #64748b;
}

.tab small {
  margin-left: 2px;
  font-size: 11px;
}

.tab.selected {
  background: #fff;
  color: #020817;
  box-shadow: 0 1px 2px rgba(0, 0, 0, 0.06);
}

.text-link {
  align-self: flex-start;
  display: flex;
  align-items: center;
  gap: 4px;
  margin: 9px 0 10px;
  height: 16px;
  font-size: 11px;
  color: #64748b;
}

.text-link .icon {
  width: 11px;
  height: 11px;
}

.map-box {
  border: 1px solid #e9ebef;
  border-radius: 5px;
  overflow: hidden;
}

.map {
  display: block;
  width: 100%;
  border-radius: 5px;
  font-family: Roboto, "Liberation Sans", sans-serif;
}

.lane,
.street {
  fill: none;
  stroke: #e0e3e9;
  stroke-width: 2;
  stroke-linejoin: round;
}

.street {
  stroke: #d5dae2;
  stroke-width: 4;
}

.map text {
  font-size: 12px;
  paint-order: stroke;
  stroke: rgba(255, 255, 255, 0.6);
  stroke-width: 2;
}

.map .name text {
  fill: #515b6b;
  font-size: 11px;
  font-weight: 500;
}

.map .name .thin {
  font-weight: 400;
}

.map .name .strong {
  font-size: 12px;
}

.map .place {
  fill: #9358d2;
}

.map .grey {
  fill: #7d8590;
}

.map .orange {
  fill: #d67a38;
}

.map .end {
  text-anchor: end;
}

.map .mid {
  text-anchor: middle;
}

.map .small {
  font-size: 10px;
}

.zone path {
  fill: rgba(60, 70, 80, 0.06);
  stroke: #6e6e72;
  stroke-width: 1.5;
}

.hint {
  height: 19px;
  line-height: 24px;
  font-size: 11px;
  color: #475569;
}

.actions {
  display: flex;
  justify-content: flex-end;
  gap: 7px;
  margin-top: 4px;
}

.btn {
  height: 35px;
  padding: 0 14px;
  border: 1px solid #e5e8ed;
  border-radius: 5px;
  font-weight: 500;
}

.btn.primary {
  border-color: #868b95;
  background: #868b95;
  color: #fff;
}

/* notifications */
.toasts {
  position: fixed;
  top: 21px;
  right: 21px;
  width: 312px;
}

.toast-behind {
  position: absolute;
  left: 8px;
  right: 8px;
  top: 30px;
  bottom: -11px;
  border-radius: 5px;
  background: #e6f4ea;
}

.toast {
  position: relative;
  display: flex;
  gap: 7px;
  padding: 14px 14px 14px 13px;
  min-height: 80px;
  border-radius: 5px;
  background: #fdeeee;
  box-shadow: 0 4px 12px rgba(0, 0, 0, 0.1);
  font-size: 11px;
  line-height: 16px;
  color: #c05450;
}

.toast strong {
  display: block;
  margin: 2px 0;
  font-weight: 600;
  color: #b93430;
}

.toast-icon {
  width: 16px;
  height: 16px;
  margin-top: 2px;
  flex: none;
}

.toast-close {
  position: absolute;
  left: -6px;
  top: -6px;
  width: 18px;
  height: 18px;
  display: grid;
  place-items: center;
  border-radius: 50%;
  background: #fdeeee;
  color: #c05450;
}

.toast-close .icon {
  width: 10px;
  height: 10px;
}
```
